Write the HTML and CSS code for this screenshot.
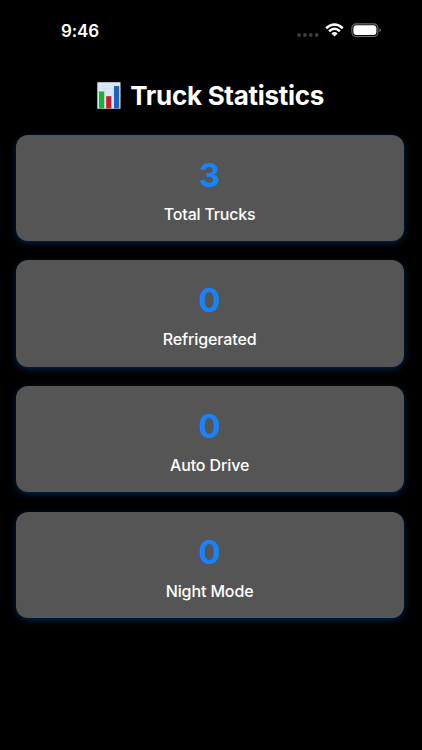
FILE: index.html
```html
<!DOCTYPE html>
<html lang="en">
<head>
<meta charset="utf-8">
<title>Truck Statistics</title>
<link rel="stylesheet" href="styles.css">
</head>
<body>
<header class="status">
  <time class="clock">9:46</time>
  <div class="indicators">
    <svg class="signal" width="22" height="4" viewBox="0 0 22 4" fill="#3d3d3d"><circle cx="2" cy="2" r="1.9"/><circle cx="7.9" cy="2" r="1.9"/><circle cx="13.8" cy="2" r="1.9"/><circle cx="19.7" cy="2" r="1.9"/></svg>
    <svg class="wifi" width="19" height="14" viewBox="0 0 19 14" fill="none" stroke="#fff" stroke-width="2.5"><path d="M1.2 5.2Q9.5-2.3 17.8 5.2"/><path d="M4.1 8.2Q9.5 3.3 14.9 8.2"/><path d="M6.4 10.4Q9.5 7.7 12.6 10.4L9.5 13.5Z" fill="#fff" stroke="none"/></svg>
    <svg class="battery" width="31" height="15" viewBox="0 0 31 15"><rect x=".9" y=".9" width="26" height="12.6" rx="4.2" fill="none" stroke="#707070" stroke-width="1.1"/><rect x="2.4" y="2.3" width="23" height="9.8" rx="3" fill="#fff"/><path d="M28.5 5Q31.2 7.2 28.5 9.4Z" fill="#777"/></svg>
  </div>
</header>
<main>
  <h1 class="title">
    <svg class="chart" width="24" height="27" viewBox="0 0 24 27"><rect x=".3" y=".2" width="23.2" height="26.6" fill="#dbe7f2"/><path d="M.3 6.5H23.5M.3 13H23.5M.3 19.5H23.5M8 .2V26.8M16 .2V26.8" stroke="#cddbe9" stroke-width=".5"/><rect x="2" y="9.5" width="5.2" height="17" fill="#12b52b"/><rect x="9.2" y="14.2" width="5.2" height="12.3" fill="#c51c2c"/><rect x="17" y="4" width="5.2" height="22.5" fill="#1d62bd"/></svg>
    <span>Truck Statistics</span>
  </h1>
  <div class="cards">
    <section class="card"><strong class="value">3</strong><span class="label total">Total Trucks</span></section>
    <section class="card"><strong class="value">0</strong><span class="label">Refrigerated</span></section>
    <section class="card"><strong class="value">0</strong><span class="label">Auto Drive</span></section>
    <section class="card"><strong class="value">0</strong><span class="label">Night Mode</span></section>
  </div>
</main>
</body>
</html>
```
FILE: styles.css
```css
* { box-sizing: border-box; }
body { margin: 0; height: 750px; overflow: hidden; background: #000; color: #fff; font-family: Inter, "Liberation Sans", sans-serif; }
svg { display: block; flex: none; }
.status { height: 60px; padding: 0 40px 0 61px; display: flex; align-items: center; justify-content: space-between; }
.clock { font-size: 17px; font-weight: 600; line-height: 20px; letter-spacing: -.1px; padding-top: 1px; }
.indicators { display: flex; align-items: center; }
.signal { margin: 9px 6px 0 0; }
.wifi { margin-right: 7px; }
main { padding: 16px 18.3px 0 15.5px; }
.title { margin: 0; padding-left: 2px; height: 40px; display: flex; align-items: center; justify-content: center; gap: 9px; font-size: 26px; font-weight: 700; line-height: 32px; letter-spacing: -.3px; white-space: nowrap; }
.chart { margin-top: -1px; }
.cards { margin-top: 18.5px; display: flex; flex-direction: column; gap: 19.3px; }
.card { height: 106.4px; border-radius: 12px; background: #555; box-shadow: 0 2px 6px rgba(0, 122, 255, .3); display: flex; flex-direction: column; align-items: center; padding-top: 20px; }
.value { font-size: 33px; font-weight: 700; line-height: 40px; color: #1683fb; }
.label { margin-top: 9px; font-size: 16px; font-weight: 500; line-height: 20px; letter-spacing: -.12px; }
.total { letter-spacing: -.2px; }
```
